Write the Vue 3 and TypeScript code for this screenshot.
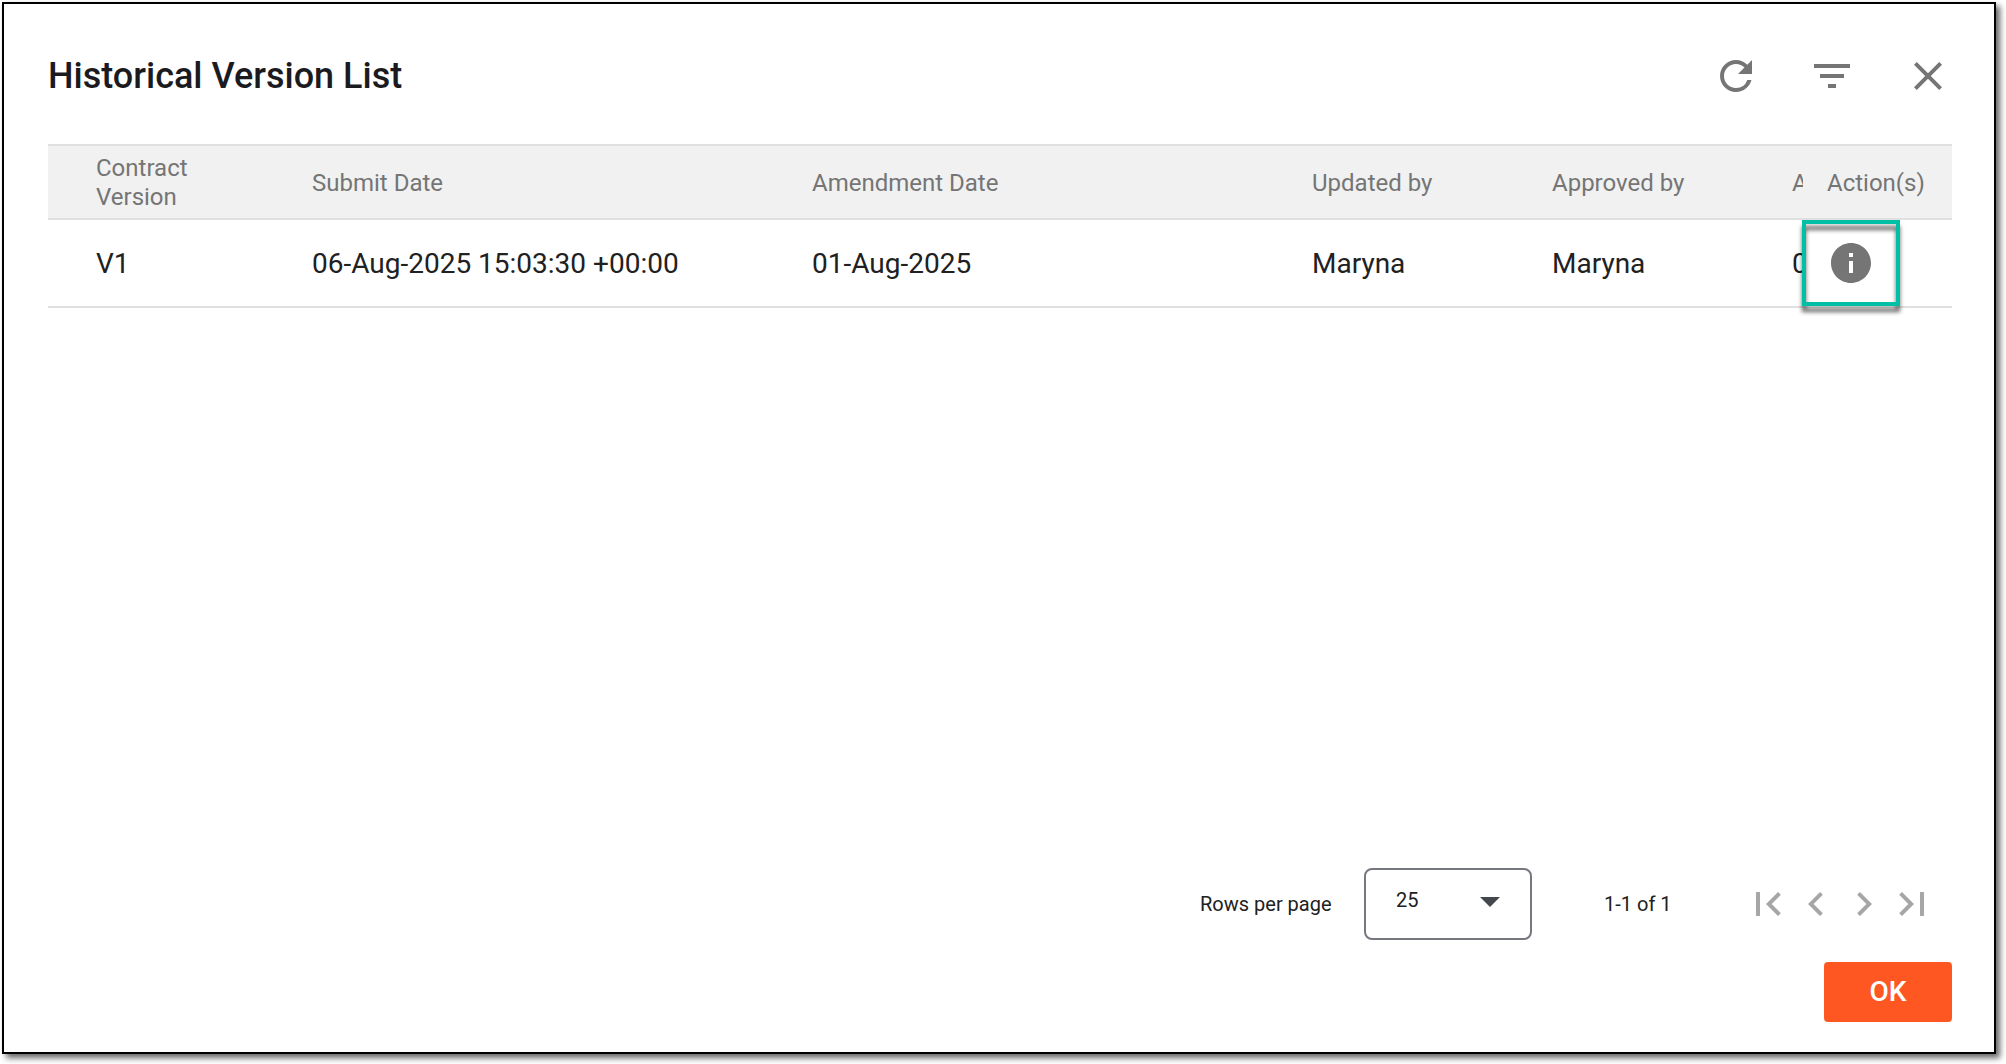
<script setup lang="ts">
import { ref } from 'vue'

interface Version {
  version: string
  submitted: string
  amended: string
  updatedBy: string
  approvedBy: string
  approved: string
}

const columns: string[] = ['Contract Version', 'Submit Date', 'Amendment Date', 'Updated by', 'Approved by', 'A']

const versions: Version[] = [
  {
    version: 'V1',
    submitted: '06-Aug-2025 15:03:30 +00:00',
    amended: '01-Aug-2025',
    updatedBy: 'Maryna',
    approvedBy: 'Maryna',
    approved: '0',
  },
]

const pageSize = ref<number>(25)

const tools = [
  {
    name: 'refresh',
    path: 'M17.65 6.35A7.958 7.958 0 0 0 12 4c-4.42 0-7.99 3.58-7.99 8s3.57 8 7.99 8c3.73 0 6.84-2.55 7.73-6h-2.08A5.99 5.99 0 0 1 12 18c-3.31 0-6-2.69-6-6s2.69-6 6-6c1.66 0 3.14.69 4.22 1.78L13 11h7V4l-2.35 2.35z',
  },
  { name: 'filter', path: 'M10 18h4v-2h-4v2zM3 6v2h18V6H3zm3 7h12v-2H6v2z' },
  {
    name: 'close',
    path: 'M19 6.41L17.59 5 12 10.59 6.41 5 5 6.41 10.59 12 5 17.59 6.41 19 12 13.41 17.59 19 19 17.59 13.41 12z',
  },
]

const pagers = [
  { name: 'first', path: 'M18.41 16.59L13.82 12l4.59-4.59L17 6l-6 6 6 6zM6 6h2v12H6z' },
  { name: 'previous', path: 'M15.41 7.41L14 6l-6 6 6 6 1.41-1.41L10.83 12z' },
  { name: 'next', path: 'M10 6L8.59 7.41 13.17 12l-4.58 4.59L10 18l6-6z' },
  { name: 'last', path: 'M5.59 7.41L10.18 12l-4.59 4.59L7 18l6-6-6-6zM16 6h2v12h-2z' },
]
</script>

<template>
  <section class="dialog">
    <header class="head">
      <h1>Historical Version List</h1>
      <div class="tools">
        <button v-for="t in tools" :key="t.name" type="button" class="icon-btn">
          <svg viewBox="0 0 24 24"><path :d="t.path" /></svg>
        </button>
      </div>
    </header>

    <div class="grid">
      <table>
        <colgroup>
          <col class="c-version" />
          <col class="c-date" />
          <col class="c-date" />
          <col class="c-person" />
          <col class="c-person" />
          <col class="c-person" />
          <col class="c-action" />
        </colgroup>
        <thead>
          <tr>
            <th v-for="c in columns" :key="c" scope="col">{{ c }}</th>
            <th scope="col" class="pinned">Action(s)</th>
          </tr>
        </thead>
        <tbody>
          <tr v-for="v in versions" :key="v.version">
            <td>{{ v.version }}</td>
            <td>{{ v.submitted }}</td>
            <td>{{ v.amended }}</td>
            <td>{{ v.updatedBy }}</td>
            <td>{{ v.approvedBy }}</td>
            <td>{{ v.approved }}</td>
            <td class="pinned">
              <button type="button" class="icon-btn">
                <svg viewBox="0 0 24 24">
                  <path d="M12 2C6.48 2 2 6.48 2 12s4.48 10 10 10 10-4.48 10-10S17.52 2 12 2zm1 15h-2v-6h2v6zm0-8h-2V7h2v2z" />
                </svg>
              </button>
              <span class="callout"></span>
            </td>
          </tr>
        </tbody>
      </table>
    </div>

    <footer class="foot">
      <div class="pagination">
        <label for="page-size">Rows per page</label>
        <div class="select">
          <select id="page-size" v-model="pageSize">
            <option :value="25">25</option>
          </select>
          <svg viewBox="0 0 24 24"><path d="M7 10l5 5 5-5z" /></svg>
        </div>
        <span class="range">1-1 of 1</span>
        <div class="pagers">
          <button v-for="p in pagers" :key="p.name" type="button" class="icon-btn" disabled>
            <svg viewBox="0 0 24 24"><path :d="p.path" /></svg>
          </button>
        </div>
      </div>
      <button type="button" class="ok">OK</button>
    </footer>
  </section>
</template>

<style>
body {
  background: #fff;
}
</style>

<style scoped>
.dialog {
  box-sizing: border-box;
  display: flex;
  flex-direction: column;
  min-height: calc(100vh - 12px);
  margin: 2px 10px 10px 2px;
  padding: 48px 42px 30px 44px;
  border: 2px solid #000;
  background: #fff;
  box-shadow: 4px 4px 6px rgba(0, 0, 0, 0.6);
  font-family: Roboto, 'Liberation Sans', sans-serif;
  color: #212121;
}

.head {
  display: flex;
  align-items: center;
  justify-content: space-between;
  margin-bottom: 44px;
}

h1 {
  margin: 0;
  font-size: 36px;
  line-height: 48px;
  font-weight: 500;
  color: #1b1b1f;
}

.tools {
  display: flex;
  gap: 48px;
}

button {
  font-family: inherit;
  border: 0;
  padding: 0;
  cursor: pointer;
}

.icon-btn {
  display: block;
  width: 48px;
  height: 48px;
  background: none;
  color: #757575;
}

svg {
  display: block;
  width: 48px;
  height: 48px;
  fill: currentColor;
}

.grid {
  flex: 1;
  overflow-x: auto;
  scrollbar-width: none;
}

table {
  width: 2085px;
  min-width: 100%;
  table-layout: fixed;
  border-collapse: separate;
  border-spacing: 0;
}

.c-version {
  width: 216px;
}

.c-date {
  width: 500px;
}

.c-person {
  width: 240px;
}

.c-action {
  width: 149px;
}

th,
td {
  box-sizing: border-box;
  padding: 2px 0 0 48px;
  border-bottom: 2px solid #e0e0e0;
  text-align: left;
  vertical-align: middle;
}

th {
  height: 76px;
  border-top: 2px solid #e0e0e0;
  background: #f1f1f1;
  color: #757575;
  font-size: 24px;
  line-height: 29px;
  font-weight: 400;
}

th:first-child {
  padding-right: 48px;
}

td {
  height: 88px;
  background: #fff;
  font-size: 28px;
  line-height: 40px;
}

.pinned {
  position: sticky;
  right: 0;
  padding-left: 24px;
}

td.pinned {
  padding-top: 0;
}

.callout {
  position: absolute;
  top: 0;
  left: -1px;
  box-sizing: border-box;
  width: 98px;
  height: 86px;
  border: 4px solid #00bfa5;
  filter: drop-shadow(0 6px 2px rgba(0, 0, 0, 0.6));
  pointer-events: none;
}

.foot {
  display: flex;
  flex-direction: column;
  align-items: flex-end;
  gap: 22px;
}

.pagination {
  display: flex;
  align-items: center;
  padding-right: 16px;
  font-size: 20px;
  line-height: 28px;
}

.pagination label {
  min-width: 148px;
}

.range {
  min-width: 76px;
}

.select {
  display: grid;
  align-items: center;
  margin: 0 72px 0 16px;
}

.select select,
.select svg {
  grid-area: 1 / 1;
}

select {
  appearance: none;
  box-sizing: border-box;
  width: 168px;
  height: 72px;
  padding: 0 32px 8px 30px;
  border: 2px solid #75797f;
  border-radius: 8px;
  background: #fff;
  color: #212121;
  font-family: inherit;
  font-size: 20px;
}

.select svg {
  justify-self: end;
  margin: 0 18px 6px 0;
  color: #44474e;
  pointer-events: none;
}

.pagers {
  display: flex;
  margin-left: 64px;
}

.pagers .icon-btn {
  color: #a6a6a8;
}

.ok {
  width: 128px;
  height: 60px;
  padding-bottom: 2px;
  border-radius: 4px;
  background: #ff5722;
  color: #fff;
  font-size: 28px;
  font-weight: 500;
}
</style>
